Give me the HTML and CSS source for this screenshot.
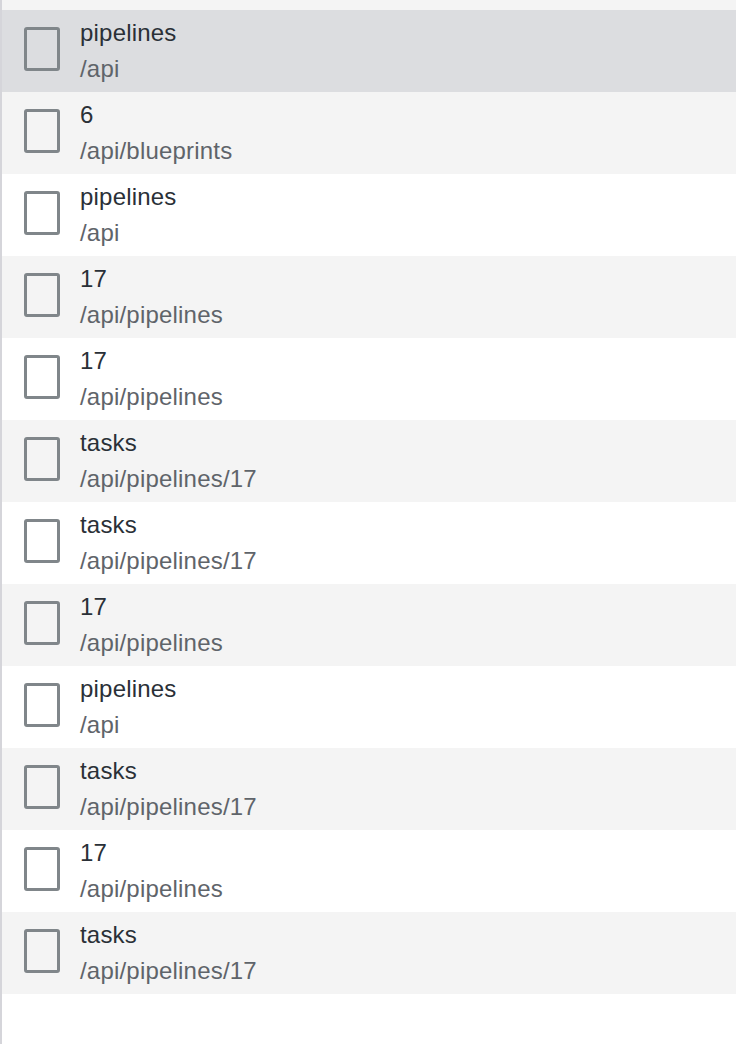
FILE: index.html
```html
<!DOCTYPE html>
<html>
<head>
<meta charset="utf-8">
<link rel="stylesheet" href="styles.css">
</head>
<body>
<div class="panel">
  <ul class="list">
    <li class="row"><span class="box"></span><div class="text"><div class="title">pipelines</div><div class="path">/api</div></div></li>
    <li class="row active"><span class="box"></span><div class="text"><div class="title">pipelines</div><div class="path">/api</div></div></li>
    <li class="row"><span class="box"></span><div class="text"><div class="title">6</div><div class="path">/api/blueprints</div></div></li>
    <li class="row"><span class="box"></span><div class="text"><div class="title">pipelines</div><div class="path">/api</div></div></li>
    <li class="row"><span class="box"></span><div class="text"><div class="title">17</div><div class="path">/api/pipelines</div></div></li>
    <li class="row"><span class="box"></span><div class="text"><div class="title">17</div><div class="path">/api/pipelines</div></div></li>
    <li class="row"><span class="box"></span><div class="text"><div class="title">tasks</div><div class="path">/api/pipelines/17</div></div></li>
    <li class="row"><span class="box"></span><div class="text"><div class="title">tasks</div><div class="path">/api/pipelines/17</div></div></li>
    <li class="row"><span class="box"></span><div class="text"><div class="title">17</div><div class="path">/api/pipelines</div></div></li>
    <li class="row"><span class="box"></span><div class="text"><div class="title">pipelines</div><div class="path">/api</div></div></li>
    <li class="row"><span class="box"></span><div class="text"><div class="title">tasks</div><div class="path">/api/pipelines/17</div></div></li>
    <li class="row"><span class="box"></span><div class="text"><div class="title">17</div><div class="path">/api/pipelines</div></div></li>
    <li class="row"><span class="box"></span><div class="text"><div class="title">tasks</div><div class="path">/api/pipelines/17</div></div></li>
  </ul>
</div>
</body>
</html>
```
FILE: styles.css
```css
html, body {
  margin: 0;
  padding: 0;
  background: #ffffff;
}

body {
  font-family: "Liberation Sans", Arial, Helvetica, sans-serif;
}

.panel {
  height: 1044px;
  overflow: hidden;
  border-left: 2px solid #d5d5da;
  box-sizing: border-box;
}

.list {
  list-style: none;
  margin: -72px 0 0 0;
  padding: 0;
}

.row {
  display: flex;
  align-items: center;
  height: 82px;
  background: #ffffff;
}

.row:nth-child(odd) {
  background: #f4f4f4;
}

.row.active {
  background: #dcdde0;
}

.box {
  flex: none;
  width: 36px;
  height: 44px;
  box-sizing: border-box;
  border: 3px solid #80868a;
  border-radius: 3px;
  margin-left: 22px;
  margin-right: 20px;
  margin-bottom: 4px;
}

.text {
  display: flex;
  flex-direction: column;
  font-size: 24px;
  line-height: 36px;
  letter-spacing: 0.2px;
}

.title {
  color: #2a3037;
}

.path {
  color: #5f646a;
}
```
